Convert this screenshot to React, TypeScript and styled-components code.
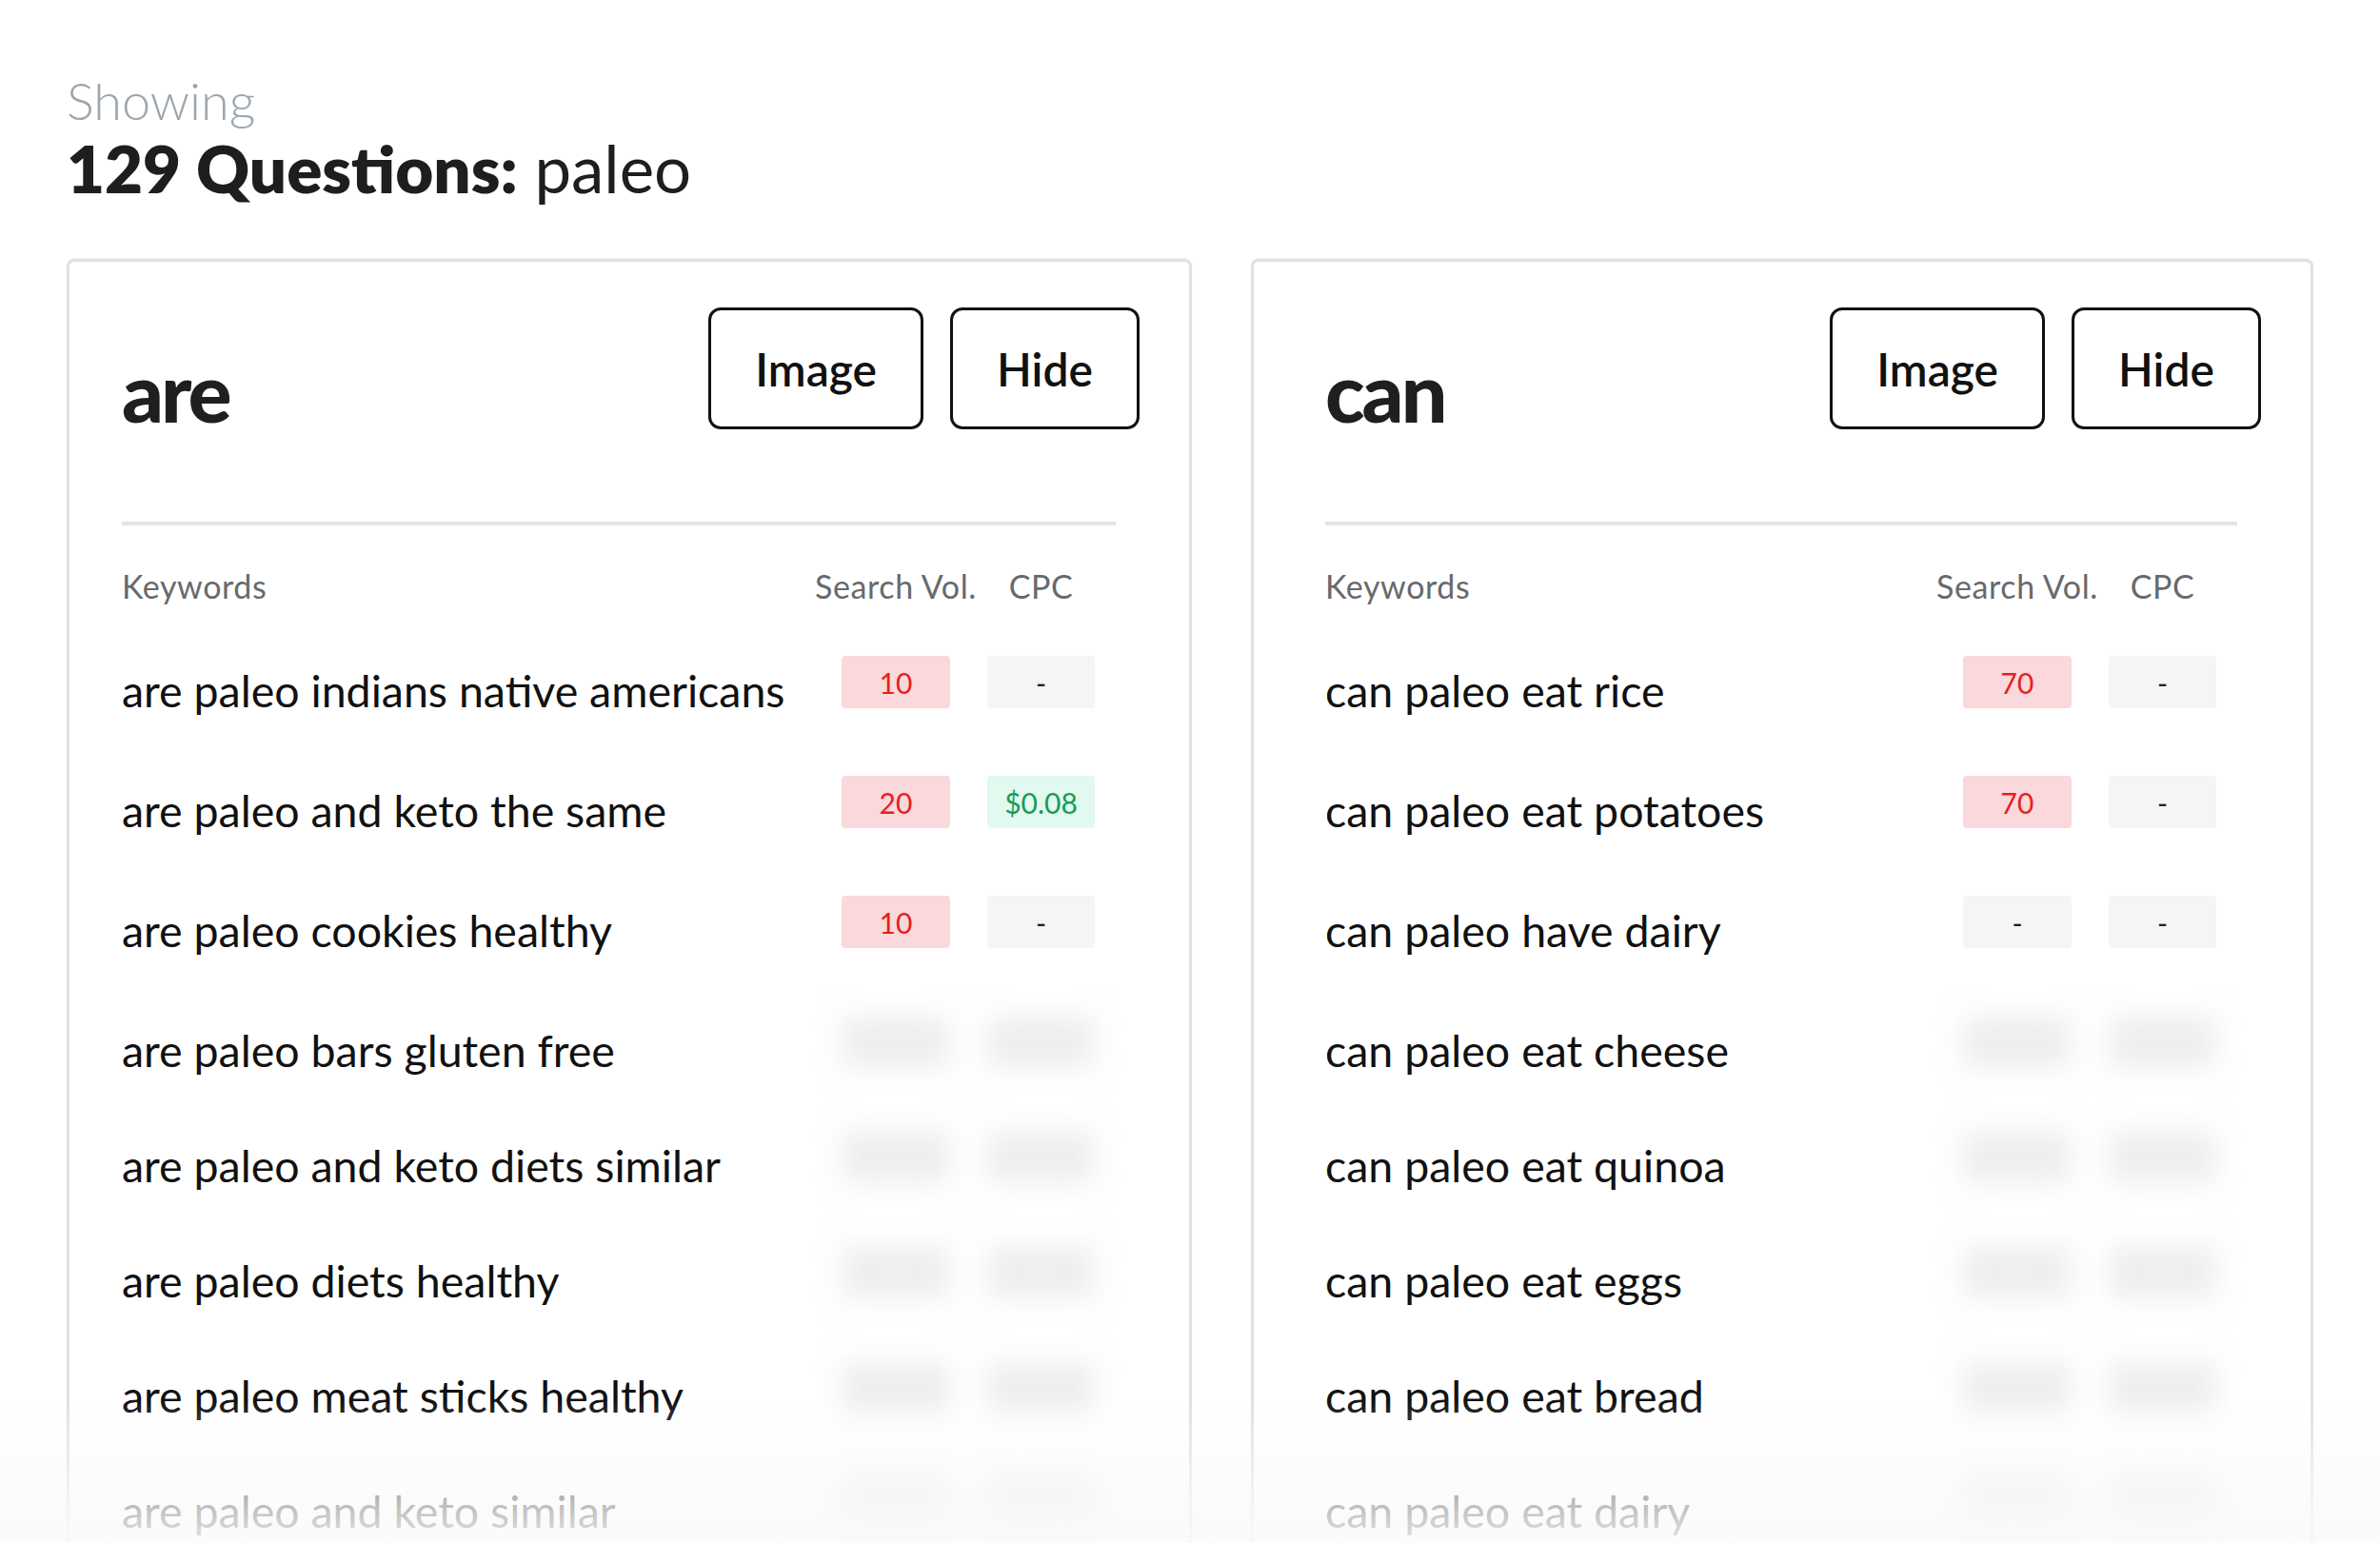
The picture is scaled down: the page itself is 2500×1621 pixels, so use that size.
import React from "react";
import styled, { createGlobalStyle, css } from "styled-components";

const Global = createGlobalStyle`
  html, body { margin: 0; padding: 0; background: #ffffff; }
  body {
    font-family: Lato, "Open Sans", "Liberation Sans", sans-serif;
    color: #1a1a1a;
    overflow: hidden;
  }
  * { box-sizing: border-box; }
`;

const Page = styled.div`
  position: relative;
  width: 2500px;
  height: 1621px;
  overflow: hidden;
  padding: 73px 70px 0;
`;

const Eyebrow = styled.div`
  font-weight: 300;
  font-size: 54px;
  line-height: 65px;
  color: #9ba6ac;
`;

const Heading = styled.h1`
  margin: -3px 0 0;
  font-size: 69px;
  line-height: 83px;
  font-weight: 400;
  color: #1e1e1e;
  strong {
    font-weight: 800;
  }
`;

const Cards = styled.div`
  display: grid;
  grid-template-columns: 1182fr 1116fr;
  column-gap: 62px;
  margin-top: 54px;
  align-items: start;
`;

const Card = styled.section<{ $padLeft: number }>`
  height: 1450px;
  border: 3px solid #dde2e5;
  border-radius: 8px;
  box-shadow: 0 -1px 2px rgba(0, 0, 0, 0.06);
  padding: 48px 52px 0 ${(p) => p.$padLeft}px;
  background: #fff;
`;

const CardHeader = styled.div`
  display: flex;
  justify-content: space-between;
  align-items: flex-start;
`;

const CardTitle = styled.h2`
  margin: 38px 0 0;
  font-weight: 900;
  font-size: 86px;
  line-height: 100px;
  letter-spacing: -3px;
  color: #1f1f1f;
`;

const ButtonGroup = styled.div`
  display: flex;
  gap: 28px;
`;

const OutlineButton = styled.button`
  height: 128px;
  padding: 0 46px;
  border: 3px solid #111;
  border-radius: 13px;
  background: #fff;
  font-family: Lato, "Open Sans", sans-serif;
  font-weight: 600;
  font-size: 48px;
  color: #111;
  cursor: pointer;
`;

const Divider = styled.div`
  height: 4px;
  background: #e1e5e8;
  margin: 87px 25px 0 0;
`;

const gridCols = css`
  display: grid;
  grid-template-columns: 1fr 114px 113px;
  column-gap: 39px;
  padding-right: 47px;
`;

const TableHead = styled.div`
  ${gridCols};
  margin-top: 44px;
  font-size: 34px;
  line-height: 40px;
  letter-spacing: 0.6px;
  color: #666a6d;
`;

const HeadCell = styled.div<{ $center?: boolean }>`
  display: flex;
  justify-content: ${(p) => (p.$center ? "center" : "flex-start")};
  white-space: nowrap;
`;

const TableBody = styled.div`
  margin-top: 53px;
`;

const Row = styled.div<{ $h: number }>`
  ${gridCols};
  height: ${(p) => p.$h}px;
  align-items: start;
`;

const Keyword = styled.div`
  margin-top: 8px;
  font-size: 46.5px;
  line-height: 56px;
  color: #111;
  white-space: nowrap;
`;

type Tone = "red" | "gray" | "green" | "blur";

const toneStyles: Record<Tone, ReturnType<typeof css>> = {
  red: css`
    background: #fbd8db;
    color: #e2231c;
  `,
  gray: css`
    background: #f5f5f5;
    color: #222;
  `,
  green: css`
    background: #e1f9ee;
    color: #179c57;
  `,
  blur: css`
    background: #eeeeee;
    color: #d0d0d0;
    filter: blur(14px);
  `,
};

const Badge = styled.div<{ $tone: Tone }>`
  height: 55px;
  border-radius: 4px;
  display: flex;
  align-items: center;
  justify-content: center;
  font-size: 30px;
  font-weight: 400;
  ${(p) => toneStyles[p.$tone]};
`;

const Fade = styled.div`
  position: absolute;
  left: 0;
  right: 0;
  bottom: 0;
  height: 150px;
  background: linear-gradient(
    to bottom,
    rgba(255, 255, 255, 0) 0%,
    rgba(250, 250, 250, 0.72) 70%,
    rgba(250, 250, 250, 0.9) 100%
  );
  pointer-events: none;
`;

type Item = { kw: string; vol?: string; cpc?: string; hidden?: boolean };

const volTone = (v?: string): Tone => (v && v !== "-" ? "red" : "gray");
const cpcTone = (v?: string): Tone => (v && v !== "-" ? "green" : "gray");

const groups: { title: string; padLeft: number; items: Item[] }[] = [
  {
    title: "are",
    padLeft: 55,
    items: [
      { kw: "are paleo indians native americans", vol: "10", cpc: "-" },
      { kw: "are paleo and keto the same", vol: "20", cpc: "$0.08" },
      { kw: "are paleo cookies healthy", vol: "10", cpc: "-" },
      { kw: "are paleo bars gluten free", hidden: true },
      { kw: "are paleo and keto diets similar", hidden: true },
      { kw: "are paleo diets healthy", hidden: true },
      { kw: "are paleo meat sticks healthy", hidden: true },
      { kw: "are paleo and keto similar", hidden: true },
    ],
  },
  {
    title: "can",
    padLeft: 75,
    items: [
      { kw: "can paleo eat rice", vol: "70", cpc: "-" },
      { kw: "can paleo eat potatoes", vol: "70", cpc: "-" },
      { kw: "can paleo have dairy", vol: "-", cpc: "-" },
      { kw: "can paleo eat cheese", hidden: true },
      { kw: "can paleo eat quinoa", hidden: true },
      { kw: "can paleo eat eggs", hidden: true },
      { kw: "can paleo eat bread", hidden: true },
      { kw: "can paleo eat dairy", hidden: true },
    ],
  },
];

export default function App() {
  return (
    <>
      <Global />
      <Page>
        <Eyebrow>Showing</Eyebrow>
        <Heading>
          <strong>129 Questions:</strong> paleo
        </Heading>
        <Cards>
          {groups.map((g) => (
            <Card key={g.title} $padLeft={g.padLeft}>
              <CardHeader>
                <CardTitle>{g.title}</CardTitle>
                <ButtonGroup>
                  <OutlineButton>Image</OutlineButton>
                  <OutlineButton>Hide</OutlineButton>
                </ButtonGroup>
              </CardHeader>
              <Divider />
              <TableHead>
                <HeadCell>Keywords</HeadCell>
                <HeadCell $center>Search Vol.</HeadCell>
                <HeadCell $center>CPC</HeadCell>
              </TableHead>
              <TableBody>
                {g.items.map((it, i) => (
                  <Row key={it.kw} $h={i < 3 ? 126 : 121}>
                    <Keyword>{it.kw}</Keyword>
                    <Badge $tone={it.hidden ? "blur" : volTone(it.vol)}>
                      {it.hidden ? "" : it.vol}
                    </Badge>
                    <Badge $tone={it.hidden ? "blur" : cpcTone(it.cpc)}>
                      {it.hidden ? "" : it.cpc}
                    </Badge>
                  </Row>
                ))}
              </TableBody>
            </Card>
          ))}
        </Cards>
        <Fade />
      </Page>
    </>
  );
}
